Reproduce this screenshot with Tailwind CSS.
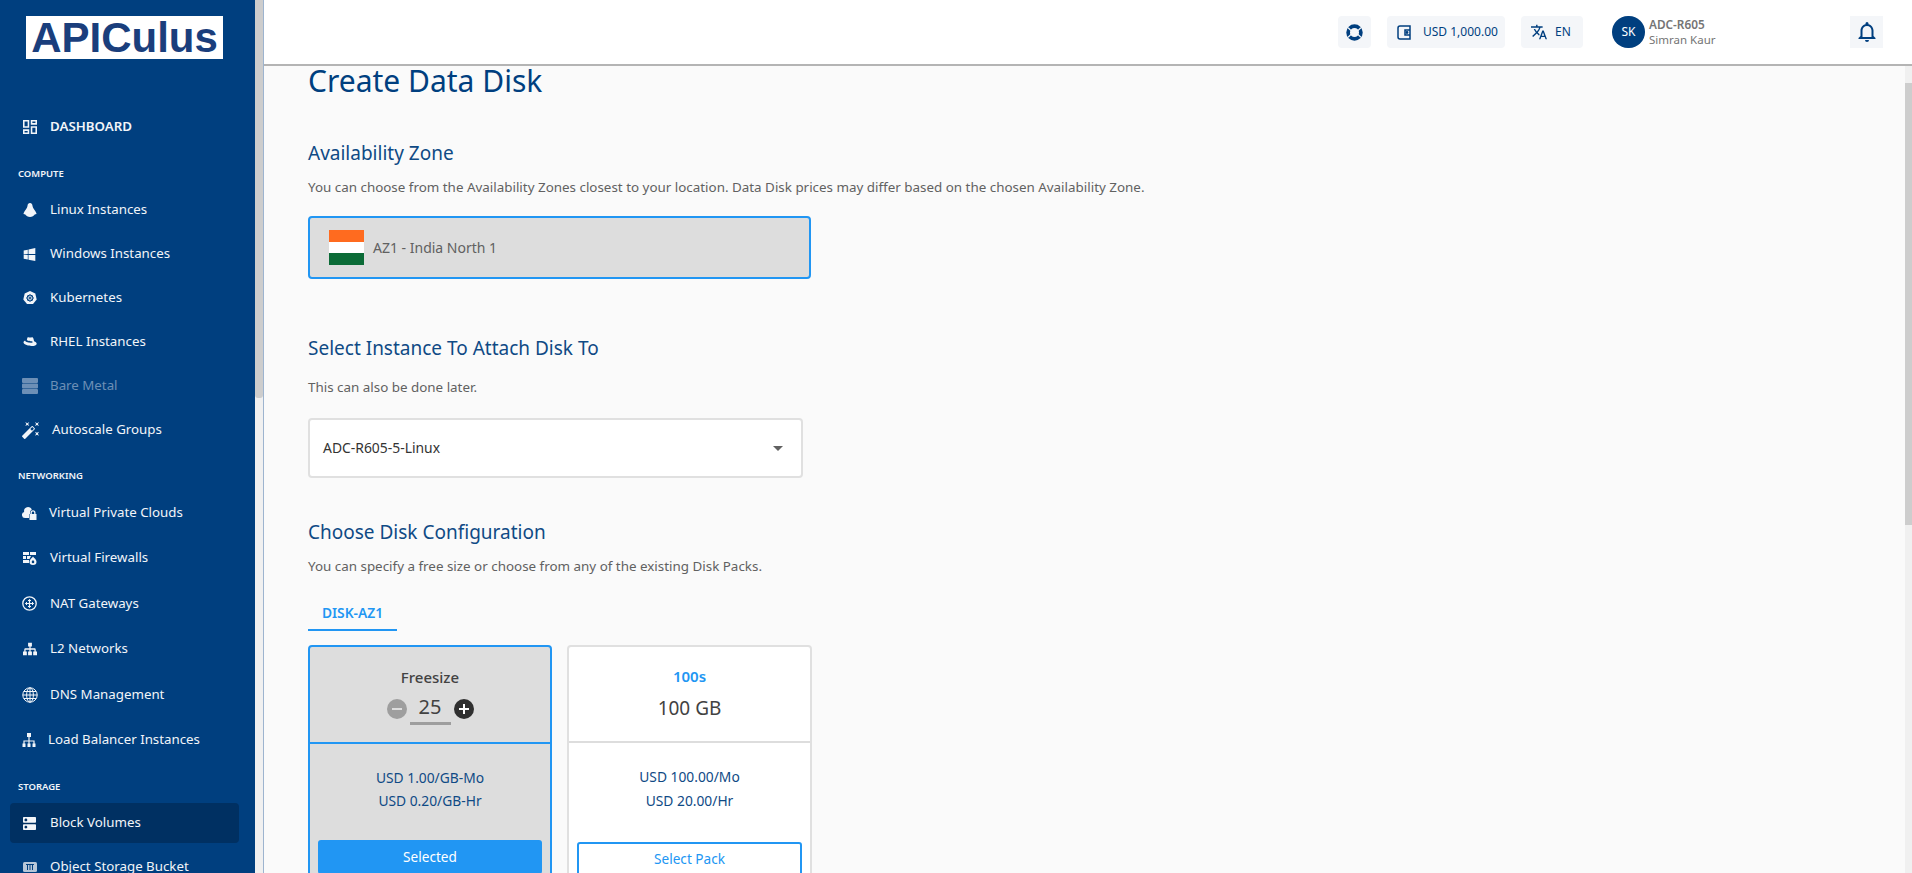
<!DOCTYPE html>
<html lang="en">
<head>
  <meta charset="UTF-8">
  <title>Create Data Disk</title>
  <script src="https://cdn.jsdelivr.net/npm/@tailwindcss/browser@4"></script>
</head>
<body class="h-screen overflow-hidden flex bg-[#fafafa] font-['Noto_Sans',sans-serif] text-[#616161]">

  <!-- sidebar -->
  <aside class="w-[255px] shrink-0 h-full overflow-hidden bg-[#003f7f] text-[#f2f5f9] text-[13.300px]">
    <div class="mt-[16px] ml-[26px] w-[197px] h-[43px] bg-white flex items-center justify-center font-['Liberation_Sans',sans-serif] font-bold text-[#1a3e7c] text-[42px] leading-[43px] whitespace-nowrap">APICulus</div>

    <a class="mt-[46px] h-[44px] flex items-center gap-[13px] pl-[23px] font-semibold text-[13.300px]">
      <svg class="w-[14px] h-[14px]" viewBox="3 3 18 18" fill="currentColor"><path d="M19 5v2h-4V5h4M9 5v6H5V5h4m10 8v6h-4v-6h4M9 17v2H5v-2h4M21 3h-8v6h8V3zM11 3H3v10h8V3zm10 8h-8v10h8V11zM11 15H3v6h8v-6z"/></svg>
      DASHBOARD
    </a>

    <div class="mt-[15px] h-[20px] leading-[20px] pl-[18px] text-[9.500px] font-semibold">COMPUTE</div>
    <a class="mt-[4px] h-[44px] flex items-center gap-[13px] pl-[23px]">
      <svg class="w-[14px] h-[14px]" viewBox="0 0 14 14" fill="currentColor"><path d="M7 0C5.300 0 4.600 1.400 4.500 3 4.300 5 1.600 7.800.6 10.200c-.3.8.4 1.200 1.400 1C3 12.800 5 14 7 14s4-1.200 5-2.800c1 .2 1.700-.2 1.400-1C12.400 7.800 9.700 5 9.500 3 9.400 1.400 8.700 0 7 0z"/></svg>
      Linux Instances
    </a>
    <a class="h-[44px] flex items-center gap-[14px] pl-[23px]">
      <svg class="w-[13px] h-[13px]" viewBox="3 3 17 19" fill="currentColor"><path d="M3,12V6.750L9,5.430V11.910L3,12M20,3V11.750L10,11.900V5.210L20,3M3,13L9,13.090V19.900L3,18.750V13M20,13.250V22L10,20.090V13.100L20,13.250Z"/></svg>
      Windows Instances
    </a>
    <a class="h-[44px] flex items-center gap-[13px] pl-[23px]">
      <svg class="w-[14px] h-[14px]" viewBox="0 0 14 14"><path d="M7 0l5.300 2.600 1.400 5.800-3.700 4.600H4L.3 8.400 1.700 2.600z" fill="currentColor"/><circle cx="7" cy="7" r="3" fill="none" stroke="#003f7f" stroke-width="1"/><path d="M7 3v8M3 7h8M4.500 4.500l5 5M9.500 4.500l-5 5" stroke="#003f7f" stroke-width=".6"/></svg>
      Kubernetes
    </a>
    <a class="h-[44px] flex items-center gap-[13px] pl-[23px]">
      <svg class="w-[14px] h-[14px]" viewBox="0 0 14 14" fill="currentColor"><path d="M4.500 2.500c1-.6 1.700.1 2.700.1s1.800-.6 2.600 0c.8.7 1 2.700 1.300 3.600 1.300.5 2.600 1.300 2.600 2.500 0 1.600-2.500 2.300-5 2.300C4.500 11 .5 9.200.5 7.300c0-.9.800-1.500 1.800-1.500-.2.800 2 1.900 5.700 1.900 1 0 1.800-.2 1.800-.7 0-.7-3.200-.6-6-1.700.2-1 .4-2.200.7-2.800z"/></svg>
      RHEL Instances
    </a>
    <a class="h-[44px] flex items-center gap-[12px] pl-[22px] text-[#6c8fb6]">
      <svg class="w-[16px] h-[16px]" viewBox="0 0 16 16" fill="currentColor"><path d="M1 0h14a1 1 0 0 1 1 1v3a1 1 0 0 1-1 1H1a1 1 0 0 1-1-1V1a1 1 0 0 1 1-1zm0 5.500h14a1 1 0 0 1 1 1v3a1 1 0 0 1-1 1H1a1 1 0 0 1-1-1v-3a1 1 0 0 1 1-1zM1 11h14a1 1 0 0 1 1 1v3a1 1 0 0 1-1 1H1a1 1 0 0 1-1-1v-3a1 1 0 0 1 1-1z"/></svg>
      Bare Metal
    </a>
    <a class="h-[44px] flex items-center gap-[13px] pl-[22px]">
      <svg class="w-[17px] h-[17px]" viewBox="1 2 21 21" fill="currentColor"><path d="M7.500,5.600L5,7L6.400,4.500L5,2L7.500,3.400L10,2L8.600,4.500L10,7L7.500,5.600M19.500,15.400L22,14L20.600,16.500L22,19L19.500,17.600L17,19L18.400,16.500L17,14L19.500,15.400M22,2L20.600,4.500L22,7L19.500,5.600L17,7L18.400,4.500L17,2L19.500,3.400L22,2M13.340,12.780L15.780,10.340L13.660,8.220L11.220,10.660L13.340,12.780M14.370,7.290L16.710,9.630C17.100,10 17.100,10.650 16.710,11.040L5.040,22.710C4.650,23.100 4,23.100 3.630,22.710L1.290,20.370C0.900,20 0.900,19.350 1.290,18.960L12.960,7.290C13.350,6.900 14,6.900 14.370,7.290Z"/></svg>
      Autoscale Groups
    </a>

    <div class="mt-[14px] h-[20px] leading-[20px] pl-[18px] text-[9.500px] font-semibold">NETWORKING</div>
    <a class="mt-[4px] h-[45.500px] flex items-center gap-[12px] pl-[22px]">
      <svg class="w-[15px] h-[14px]" viewBox="0 0 15 14" fill="currentColor"><path d="M6 1a4 4 0 0 1 3.800 2.800C8.700 4.300 8 5.300 8 6.500V8H7v4H3a3 3 0 0 1-.8-5.900A4 4 0 0 1 6 1z"/><path d="M8.500 8V6.800a2.500 2.500 0 0 1 5 0V8h1v6h-7V8zm1.300 0h2.400V6.800a1.200 1.200 0 0 0-2.400 0z"/></svg>
      Virtual Private Clouds
    </a>
    <a class="h-[45.500px] flex items-center gap-[13px] pl-[23px]">
      <svg class="w-[14px] h-[14px]" viewBox="0 0 14 14" fill="currentColor"><path d="M0 1h6v3H0zm7 0h6v3H7zM0 5h3v3H0zm4 0h4L6.500 8H4zM0 9h6v3H0z"/><path d="M10 5.500c1 1.500 3.500 3 3.500 5.200a3.500 3.300 0 0 1-7 0C6.500 8.500 9 7 10 5.500zm0 3.500c-.5.800-1.300 1.200-1.300 2a1.300 1.300 0 0 0 2.600 0c0-.800-.8-1.200-1.300-2z"/></svg>
      Virtual Firewalls
    </a>
    <a class="h-[45.500px] flex items-center gap-[13px] pl-[22px]">
      <svg class="w-[15px] h-[15px]" viewBox="0 0 15 15" fill="none" stroke="currentColor"><circle cx="7.500" cy="7.500" r="6.700" stroke-width="1.300"/><path d="M7.500 3.500v8M3.500 7.500h8" stroke-width="1.200"/><path d="M6 5l1.500-1.500L9 5M6 10l1.500 1.500L9 10M5 6L3.500 7.500 5 9M10 6l1.500 1.500L10 9" stroke-width="1"/></svg>
      NAT Gateways
    </a>
    <a class="h-[45.500px] flex items-center gap-[13px] pl-[23px]">
      <svg class="w-[14px] h-[14px]" viewBox="1 2 22 20" fill="currentColor"><path d="M9,2V8H11V11H5C3.890,11 3,11.890 3,13V16H1V22H7V16H5V13H11V16H9V22H15V16H13V13H19V16H17V22H23V16H21V13C21,11.890 20.110,11 19,11H13V8H15V2H9Z"/></svg>
      L2 Networks
    </a>
    <a class="h-[45.500px] flex items-center gap-[12px] pl-[22px]">
      <svg class="w-[16px] h-[16px]" viewBox="0 0 16 16" fill="none" stroke="currentColor" stroke-width="1"><circle cx="8" cy="8" r="7.200"/><ellipse cx="8" cy="8" rx="3.400" ry="7.200"/><path d="M8 .8v14.400M.8 8h14.400M1.800 4.500h12.400M1.800 11.500h12.400"/></svg>
      DNS Management
    </a>
    <a class="h-[45.500px] flex items-center gap-[12px] pl-[22px]">
      <svg class="w-[14px] h-[14px]" viewBox="0 0 14 14" fill="none" stroke="currentColor" stroke-width="1.200"><path d="M7 4v4M2 11V8h10v3M7 8v3"/><path d="M5 0h4v4H5zM.5 10.500h3V14h-3zM5.500 10.500h3V14h-3zM10.500 10.500h3V14h-3z" fill="currentColor" stroke="none"/></svg>
      Load Balancer Instances
    </a>

    <div class="mt-[14px] h-[20px] leading-[20px] pl-[18px] text-[9.500px] font-semibold">STORAGE</div>
    <a class="mt-[6px] ml-[10px] w-[229px] h-[40px] rounded-[4px] bg-[#003062] flex items-center gap-[14px] pl-[13px]">
      <svg class="w-[13px] h-[13px]" viewBox="3 3 18 18" fill="currentColor"><path d="M20 13H4c-.55 0-1 .45-1 1v6c0 .55.45 1 1 1h16c.55 0 1-.45 1-1v-6c0-.55-.45-1-1-1zM7 19c-1.100 0-2-.9-2-2s.9-2 2-2 2 .9 2 2-.9 2-2 2zM20 3H4c-.55 0-1 .45-1 1v6c0 .55.45 1 1 1h16c.55 0 1-.45 1-1V4c0-.55-.45-1-1-1zM7 9c-1.100 0-2-.9-2-2s.9-2 2-2 2 .9 2 2-.9 2-2 2z"/></svg>
      Block Volumes
    </a>
    <a class="mt-[2px] h-[44px] flex items-center gap-[13px] pl-[23px]">
      <svg class="w-[14px] h-[10px]" viewBox="0 0 14 10"><rect width="14" height="10" rx="1.500" fill="#b6c6d8"/><path d="M3 2.500h8M4.500 2.500V8M7 2.500V8M9.500 2.500V8" stroke="#003f7f" stroke-width="1"/></svg>
      Object Storage Bucket
    </a>
  </aside>

  <!-- sidebar scrollbar -->
  <div class="w-[9px] shrink-0 h-full bg-[#f0f0f0] border-r border-[#9db4cf]">
    <div class="w-[8px] h-[398px] bg-[#cdcdcd] rounded-b-[3px]"></div>
  </div>

  <div class="flex-1 min-w-0 h-full flex flex-col">
    <!-- top bar -->
    <header class="h-[66px] shrink-0 bg-white border-b-2 border-[#b4b4b4] flex items-center justify-end pr-[29px] text-[#003f7f] text-[12px] whitespace-nowrap">
      <div class="w-[33px] h-[32px] bg-[#f4f6f9] rounded-[4px] flex items-center justify-center">
        <svg class="w-[17px] h-[17px]" viewBox="0 0 16 16"><circle cx="8" cy="8" r="6" fill="none" stroke="#003f7f" stroke-width="3.500"/><path d="M2 3.500l3 3M14 3.500l-3 3M2 12.500l3-3M14 12.500l-3-3" stroke="#f4f6f9" stroke-width="1.200"/></svg>
      </div>
      <div class="ml-[16px] h-[32px] w-[118px] bg-[#f4f6f9] rounded-[4px] flex items-center gap-[11px] pl-[10px]">
        <svg class="w-[15px] h-[15px]" viewBox="0 0 15 15" fill="none" stroke="#003f7f" stroke-width="1.500"><path d="M1 3a2 2 0 0 1 2-2h10v13H3a2 2 0 0 1-2-2z"/><path d="M13 5H8v5h5"/><circle cx="10" cy="7.500" r=".7" fill="#003f7f"/></svg>
        <span>USD 1,000.00</span>
      </div>
      <div class="ml-[16px] h-[32px] w-[62px] bg-[#f4f6f9] rounded-[4px] flex items-center gap-[8px] pl-[10px]">
        <svg class="w-[16px] h-[16px]" viewBox="1 2 22 20" fill="#003f7f"><path d="M12.870,15.070L10.330,12.560L10.360,12.530C12.100,10.590 13.340,8.360 14.070,6H17V4H10V2H8V4H1V6H12.170C11.500,7.920 10.440,9.750 9,11.350C8.070,10.320 7.300,9.190 6.690,8H4.690C5.420,9.630 6.420,11.170 7.670,12.560L2.580,17.580L4,19L9,14L12.110,17.110L12.870,15.070M18.500,10H16.500L12,22H14L15.120,19H19.870L21,22H23L18.500,10M15.880,17L17.500,12.670L19.120,17H15.880Z"/></svg>
        <span>EN</span>
      </div>
      <div class="ml-[29px] w-[33px] h-[32px] rounded-full bg-[#003f7f] text-white flex items-center justify-center text-[12px]">SK</div>
      <div class="ml-[4px] w-[201px] text-[#757575] leading-[16px]">
        <div class="font-semibold text-[11.800px]">ADC-R605</div>
        <div class="text-[11.500px]">Simran Kaur</div>
      </div>
      <div class="w-[33px] h-[32px] bg-[#f4f6f9] flex items-center justify-center">
        <svg class="w-[22px] h-[22px]" viewBox="1 1 21 22" fill="#003f7f"><path d="M16,17H7V10.500C7,8 9,6 11.500,6C14,6 16,8 16,10.500M18,16V10.500C18,7.430 15.860,4.860 13,4.180V3.500A1.500,1.500 0 0,0 11.500,2A1.500,1.500 0 0,0 10,3.500V4.180C7.130,4.860 5,7.430 5,10.500V16L3,18V19H20V18M11.500,22A2,2 0 0,0 13.500,20H9.500A2,2 0 0,0 11.500,22Z"/></svg>
      </div>
    </header>

    <div class="flex-1 min-h-0 flex">
      <main class="flex-1 min-w-0 pl-[44px]">
        <h1 class="text-[30px] leading-[30px] text-[#003f7f]">Create Data Disk</h1>

        <h2 class="mt-[45px] text-[19px] leading-[24px] text-[#0f4a85]">Availability Zone</h2>
        <p class="mt-[12px] text-[13.400px] leading-[20px]">You can choose from the Availability Zones closest to your location. Data Disk prices may differ based on the chosen Availability Zone.</p>
        <div class="mt-[19px] w-[503px] h-[63px] rounded-[4px] border-2 border-[#2196f3] bg-[#dddddd] flex items-center pl-[19px] gap-[9px]">
          <div class="w-[35px] h-[35px] flex flex-col">
            <div class="flex-1 bg-[#ff6b1f]"></div>
            <div class="flex-1 bg-white"></div>
            <div class="flex-1 bg-[#0b6b37]"></div>
          </div>
          <span class="text-[14px]">AZ1 - India North 1</span>
        </div>

        <h2 class="mt-[57px] text-[19px] leading-[24px] text-[#0f4a85]">Select Instance To Attach Disk To</h2>
        <p class="mt-[17px] text-[13.400px] leading-[20px]">This can also be done later.</p>
        <div class="mt-[21px] w-[495px] h-[60px] rounded-[4px] border-2 border-[#e0e0e0] bg-white flex items-center justify-between pl-[13px] pr-[18px]">
          <span class="text-[13.900px] text-[#333333]">ADC-R605-5-Linux</span>
          <span class="w-0 h-0 border-x-[5px] border-x-transparent border-t-[5px] border-t-[#616161]"></span>
        </div>

        <h2 class="mt-[42px] text-[19px] leading-[24px] text-[#0f4a85]">Choose Disk Configuration</h2>
        <p class="mt-[12px] text-[13.400px] leading-[20px]">You can specify a free size or choose from any of the existing Disk Packs.</p>
        <div class="mt-[21px] w-[89px] h-[34px] border-b-2 border-[#2196f3] text-center text-[#2196f3] text-[13.800px] font-semibold leading-[32px]">DISK-AZ1</div>

        <div class="mt-[14px] h-[228px] overflow-hidden flex gap-[15px] items-start">
          <div class="w-[244px] h-[300px] shrink-0 rounded-[4px] border-2 border-[#2196f3] bg-[#dddddd]">
            <div class="h-[97px] border-b-2 border-[#2196f3] flex flex-col items-center pt-[19px]">
              <div class="text-[15px] font-medium leading-[22px] text-[#424242]">Freesize</div>
              <div class="mt-[4px] flex items-center">
                <span class="w-[20px] h-[20px] rounded-full bg-[#9e9e9e] flex items-center justify-center"><span class="w-[10px] h-[2px] bg-[#dddddd]"></span></span>
                <span class="mx-[3px] w-[41px] border-b-[3px] border-[#9e9e9e] text-center text-[20px] leading-[30px] text-[#424242]">25</span>
                <span class="w-[20px] h-[20px] rounded-full bg-[#303030] flex items-center justify-center relative"><span class="w-[10px] h-[2px] bg-white"></span><span class="absolute w-[2px] h-[10px] bg-white"></span></span>
              </div>
            </div>
            <div class="mt-[22px] text-center text-[13.800px] leading-[23px] text-[#0f4a85]">
              <div>USD 1.00/GB-Mo</div>
              <div>USD 0.20/GB-Hr</div>
            </div>
            <div class="mt-[28px] mx-[8px] h-[34px] rounded-[3px] bg-[#2196f3] text-white text-[13.600px] flex items-center justify-center">Selected</div>
          </div>
          <div class="w-[245px] h-[300px] shrink-0 rounded-[4px] border-2 border-[#e0e0e0] bg-white">
            <div class="h-[96px] border-b-2 border-[#dddddd] flex flex-col items-center pt-[18px]">
              <div class="text-[15px] font-semibold leading-[22px] text-[#2196f3]">100s</div>
              <div class="mt-[7px] text-[19px] leading-[28px] text-[#424242]">100 GB</div>
            </div>
            <div class="mt-[22px] text-center text-[13.800px] leading-[24px] text-[#0f4a85]">
              <div>USD 100.00/Mo</div>
              <div>USD 20.00/Hr</div>
            </div>
            <div class="mt-[29px] mx-[8px] h-[34px] rounded-[3px] border-2 border-[#2196f3] text-[#2196f3] text-[13.600px] flex items-center justify-center">Select Pack</div>
          </div>
        </div>
      </main>

      <!-- page scrollbar -->
      <div class="w-[7px] shrink-0 bg-[#f0f0f0] pt-[17px]">
        <div class="h-[442px] bg-[#cdcdcd]"></div>
      </div>
    </div>
  </div>

</body>
</html>
